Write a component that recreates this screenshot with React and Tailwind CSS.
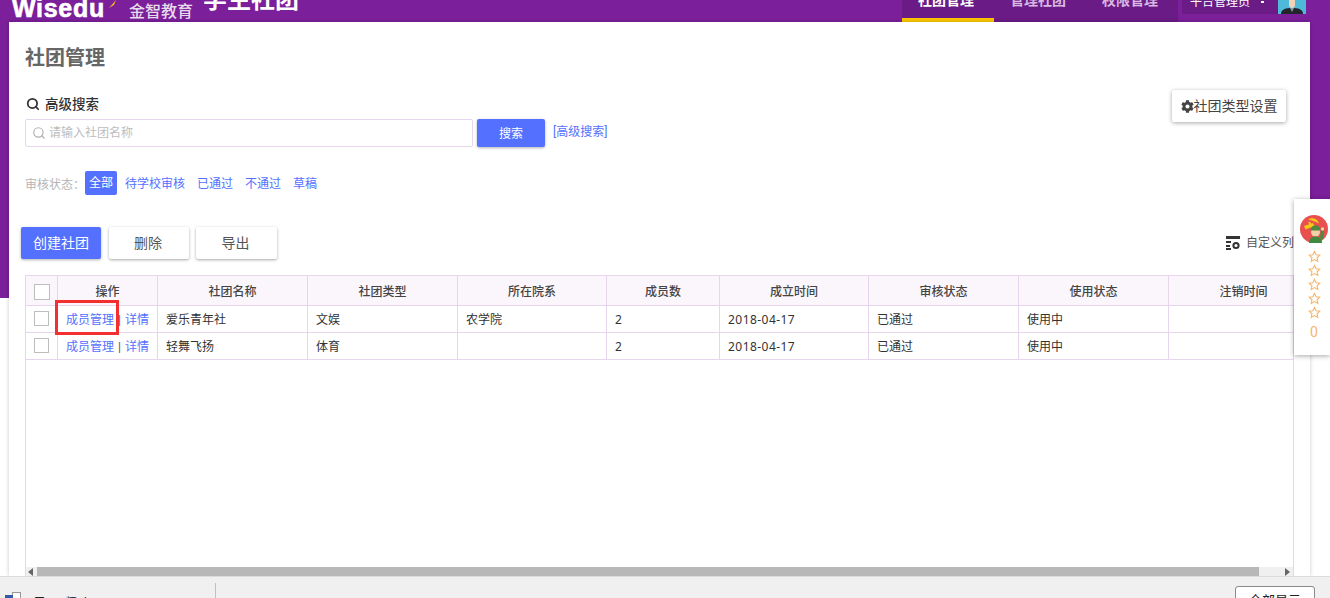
import React from "react";
import { Search } from "lucide-react";
import { FaCog } from "react-icons/fa";

const columns = [
  ["操作", "w-[100px]"],
  ["社团名称", "w-[150px]"],
  ["社团类型", "w-[150px]"],
  ["所在院系", "w-[149px]"],
  ["成员数", "w-[113px]"],
  ["成立时间", "w-[149px]"],
  ["审核状态", "w-[150px]"],
  ["使用状态", "w-[150px]"],
  ["注销时间", "w-[150px]"],
];
const rows = [
  ["爱乐青年社", "文娱", "农学院", "2", "2018-04-17", "已通过", "使用中", ""],
  ["轻舞飞扬", "体育", "", "2", "2018-04-17", "已通过", "使用中", ""],
];
const bodyWidths = ["w-[150px]", "w-[150px]", "w-[149px]", "w-[113px]", "w-[149px]", "w-[150px]", "w-[150px]", "w-[150px]"];

function Star() {
  return (
    <svg viewBox="0 0 24 24" className="w-[13px] h-[13px] block" fill="none" stroke="#f5b66a" strokeWidth="2">
      <path d="M12 2.500l2.900 6.300 6.900.8-5.100 4.700 1.400 6.800-6.100-3.400-6.100 3.400 1.400-6.800-5.100-4.700 6.900-.8z" />
    </svg>
  );
}

function Avatar() {
  return (
    <svg viewBox="0 0 28 28" className="w-[28px] h-[28px] block">
      <circle cx="14" cy="14" r="14" fill="#ea4f50" />
      <path d="M8 4c5-2 10 0 11 5-3-3-7-3-11-5z" fill="#f6c915" />
      <path d="M4 11l9-3 1.500 3-9 3.500z" fill="#f6c915" />
      <path d="M9 7l5 8" stroke="#f6c915" strokeWidth="2" />
      <circle cx="15.500" cy="17" r="4.500" fill="#f1cfa9" />
      <path d="M10.500 15.500c0-3.500 2-5 5-5s5 1.500 5 5z" fill="#4c8a3f" />
      <path d="M9 28c0-4 2.500-6.500 6.500-6.500S22 24 22 28z" fill="#3f8a3f" />
      <path d="M20 23l1-8 3 .5-1 9z" fill="#4c8a3f" />
      <circle cx="22.500" cy="14" r="1.700" fill="#f1cfa9" />
    </svg>
  );
}

function HeaderAvatar() {
  return (
    <svg viewBox="0 0 28 14" className="w-[28px] h-[14px] block flex-none">
      <rect width="28" height="14" fill="#4fb9d9" />
      <path d="M3 14c0-5 5-6 11-6s11 1 11 6z" fill="#22262c" />
      <path d="M11 0h6v5c0 2-1.500 3-3 3s-3-1-3-3z" fill="#f1d3b8" />
      <path d="M12 8h4l-2 4z" fill="#8b9aa3" />
    </svg>
  );
}

export default function App() {
  return (
    <div className="relative w-[1330px] h-[598px] overflow-hidden bg-white text-[12px] text-[#333] font-['Roboto','Noto_Sans_CJK_SC',sans-serif]">
      <div className="h-[298px] bg-[#7b1f9b]">
        <header className="h-[22px] flex items-start overflow-hidden text-white">
          <div className="w-[902px] flex items-start h-[22px] overflow-hidden pl-[12px]">
            <span className="font-['Liberation_Sans',sans-serif] font-black text-[25px] leading-[28px] tracking-[0.7px] -mt-[6px] flex-none [-webkit-text-stroke:0.6px_white]">Wisedu</span>
            <svg viewBox="0 0 12 8" className="ml-[2px] w-[12px] h-[8px] flex-none"><path d="M2 8L9 0l-2 5z" fill="#f5b81c" /></svg>
            <span className="ml-[10px] text-[16px] leading-[16px] mt-[4px] font-medium text-[#e6dcea] flex-none">金智教育</span>
            <span className="ml-[10px] text-[24px] font-bold leading-[30px] -mt-[15px] flex-none">学生社团</span>
          </div>
          <nav className="flex h-[22px] bg-[#6a1b85] text-[14px] font-bold flex-none">
            <div className="w-[92px] h-[22px] border-b-[4px] border-[#fdc800] text-white text-center pr-[4px] overflow-hidden"><span className="block -mt-[10px] leading-[20px]">社团管理</span></div>
            <div className="w-[92px] text-[#d9b8e2] text-center pr-[4px] overflow-hidden"><span className="block -mt-[10px] leading-[20px]">管理社团</span></div>
            <div className="w-[92px] text-[#d9b8e2] text-center pr-[4px] overflow-hidden"><span className="block -mt-[10px] leading-[20px]">权限管理</span></div>
          </nav>
          <div className="ml-[4px] w-[96px] h-[14px] bg-[#6a1b85] flex items-start overflow-hidden text-[12px] pl-[8px] flex-none">
            <span className="-mt-[5px] leading-[14px] flex-none">平台管理员</span>
            <span className="ml-[11px] w-[3px] h-[2px] mt-[1px] bg-white flex-none" />
          </div>
          <HeaderAvatar />
        </header>
      </div>

      <main className="absolute left-[9px] top-[22px] w-[1301px] h-[554px] bg-white shadow-[0_0_4px_rgba(0,0,0,0.22)]">
        <h1 className="pl-[16px] pt-[22px] text-[20px] leading-[28px] font-bold text-[#666]">社团管理</h1>
        <div className="flex justify-between">
          <div className="pl-[16px]">
            <div className="mt-[23px] flex items-center h-[18px] text-[13.500px] font-medium text-[#333]">
              <Search className="w-[14px] h-[14px] ml-[1px] mr-[5px]" strokeWidth={3} />
              高级搜索
            </div>
            <div className="mt-[6px] flex items-center">
              <div className="w-[448px] h-[28px] border border-[#e6d5ec] rounded-[2px] flex items-center pl-[6px] text-[#bdbdbd]">
                <Search className="w-[14px] h-[14px] mr-[3px] text-[#b0b0b0]" />
                请输入社团名称
              </div>
              <button className="ml-[4px] w-[68px] h-[28px] bg-[#5470ff] text-white rounded-[2px] shadow-[0_1px_3px_rgba(0,0,0,0.3)] pt-[2px]">搜索</button>
              <a className="ml-[8px] text-[#5470ff] -mt-[3px]">[高级搜索]</a>
            </div>
          </div>
          <button className="mt-[18px] mr-[24px] w-[114px] h-[32px] flex items-center justify-center bg-white rounded-[2px] text-[14px] text-[#444] shadow-[0_1px_4px_rgba(0,0,0,0.35)]">
            <FaCog className="w-[13px] h-[13px] text-[#444]" />
            社团类型设置
          </button>
        </div>

        <div className="mt-[24px] pl-[16px] flex items-center h-[24px]">
          <span className="text-[#b5b5b5] mt-[3px]">审核状态：</span>
          <span className="w-[32px] h-[24px] bg-[#5470ff] rounded-[2px] text-white text-center leading-[25px]">全部</span>
          <span className="ml-[8px] text-[#5470ff] mt-[2px]">待学校审核</span>
          <span className="ml-[12px] text-[#5470ff] mt-[2px]">已通过</span>
          <span className="ml-[12px] text-[#5470ff] mt-[2px]">不通过</span>
          <span className="ml-[12px] text-[#5470ff] mt-[2px]">草稿</span>
        </div>

        <div className="mt-[32px] pl-[12px] pr-[16px] flex items-center h-[32px]">
          <button className="w-[80px] h-[32px] bg-[#5470ff] text-white text-[14px] rounded-[2px] shadow-[0_1px_3px_rgba(0,0,0,0.3)]">创建社团</button>
          <button className="ml-[8px] w-[80px] pr-[2px] h-[32px] bg-white text-[#555] text-[14px] rounded-[2px] shadow-[0_1px_3px_rgba(0,0,0,0.35)]">删除</button>
          <button className="ml-[7px] w-[81px] pr-[2px] h-[32px] bg-white text-[#555] text-[14px] rounded-[2px] shadow-[0_1px_3px_rgba(0,0,0,0.35)]">导出</button>
          <div className="ml-auto flex items-center text-[#555]">
            <svg viewBox="0 0 14 14" className="w-[14px] h-[14px] mr-[6px]">
              <path d="M0 0h14v3H0zM0 5h5v2H0zM0 9h4v2H0zM0 12h5v2H0z" fill="#333" />
              <circle cx="10" cy="9.500" r="2.600" fill="none" stroke="#333" strokeWidth="2" />
            </svg>
            自定义列
          </div>
        </div>

        <div className="relative ml-[16px] mt-[16px] w-[1269px] h-[301px] border-l border-r border-[#e6d5ec] overflow-hidden">
          <div className="flex h-[31px] bg-[#faf6fc] border-t border-b border-[#e6d5ec] font-medium text-[#444]">
            <div className="w-[32px] flex-none border-r border-[#e6d5ec] flex items-center justify-center">
              <span className="w-[16px] h-[16px] mt-[2px] border border-[#bdbdbd] bg-white" />
            </div>
            {columns.map(([label, w]) => (
              <div key={label} className={`${w} flex-none border-r border-[#e6d5ec] flex items-center justify-center pt-[2px]`}>{label}</div>
            ))}
          </div>
          {rows.map((row) => (
            <div key={row[0]} className="flex h-[27px] border-b border-[#e6d5ec]">
              <div className="w-[32px] flex-none border-r border-[#e6d5ec] flex items-center justify-center">
                <span className="w-[15px] h-[15px] -mt-[2px] border border-[#bdbdbd] bg-white" />
              </div>
              <div className="w-[100px] flex-none border-r border-[#e6d5ec] flex items-center justify-center pt-[2px] text-[#5470ff]">
                成员管理<span className="mx-[4px] text-[#555]">|</span>详情
              </div>
              {row.map((cell, i) => (
                <div key={i} className={`${bodyWidths[i]} flex-none border-r border-[#e6d5ec] flex items-center pl-[8px] pt-[2px] ${i === 3 || i === 4 ? "font-['Noto_Sans',sans-serif] tracking-[0.45px]" : ""}`}>{cell}</div>
              ))}
            </div>
          ))}
          <div className="absolute left-0 right-0 bottom-0 h-[9px] bg-[#f0f0f0] flex items-center">
            <span className="ml-[2px] w-0 h-0 border-y-[4px] border-y-transparent border-r-[5px] border-r-[#666]" />
            <div className="ml-[4px] w-[1222px] h-[9px] bg-[#b8b8b8]" />
            <span className="ml-auto mr-[3px] w-0 h-0 border-y-[4px] border-y-transparent border-l-[5px] border-l-[#666]" />
          </div>
        </div>
      </main>

      <div className="absolute left-[55px] top-[300px] w-[64px] h-[35px] border-[3px] border-[#f42f2f]" />

      <aside className="absolute left-[1294px] top-[199px] w-[36px] h-[156px] bg-white shadow-[0_1px_5px_rgba(0,0,0,0.35)] flex flex-col items-center pt-[16px] pl-[4px]">
        <Avatar />
        <div className="mt-[7px] flex flex-col gap-[1px]"><Star /><Star /><Star /><Star /><Star /></div>
        <span className="mt-[4px] text-[14px] leading-[18px] text-[#f5b66a]">0</span>
      </aside>

      <footer className="absolute left-0 top-[576px] w-[1330px] h-[22px] bg-[#f0f0f0] border-t border-[#dcdcdc] overflow-hidden">
        <div className="absolute left-[12px] top-[15px] w-[9px] h-[8px] bg-white border border-[#999]" />
        <div className="absolute left-[5px] top-[18px] w-[8px] h-[6px] bg-[#2f5ca8]" />
        <span className="absolute left-[34px] top-[19px] text-[12px] leading-[14px] text-[#222]">已.CU师.doc</span>
        <div className="absolute left-[215px] top-[6px] w-px h-[16px] bg-[#c0c0c0]" />
        <div className="absolute left-[1235px] top-[9px] w-[80px] h-[24px] bg-white border border-[#8a8a8a] rounded-[3px] text-center text-[13px] leading-[22px] pt-[3px] text-[#222]">全部显示</div>
        <span className="absolute left-[1321px] top-[16px] text-[12px] text-[#555]">×</span>
      </footer>
    </div>
  );
}
